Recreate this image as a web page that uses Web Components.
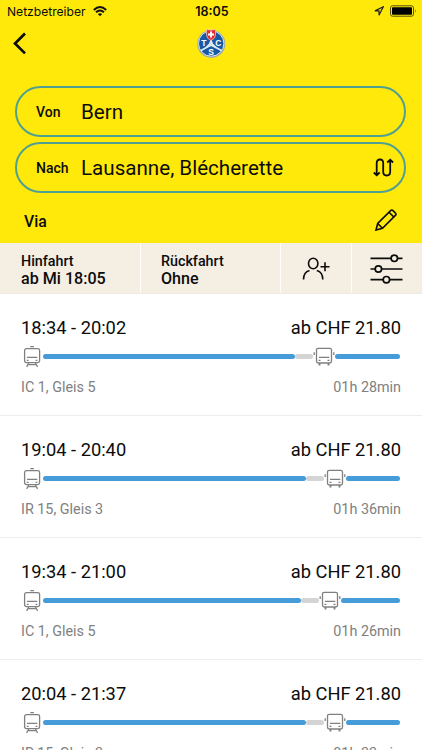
<!DOCTYPE html>
<html lang="de">
<head>
<meta charset="utf-8">
<meta name="viewport" content="width=device-width, initial-scale=1">
<title>Verbindungen</title>
<style>
  body { margin: 0; background: #fff; color: #0c0c0c; font-family: Roboto, sans-serif; height: 750px; overflow: hidden; }
</style>
</head>
<body>
<trip-app></trip-app>
<script>
class StatusBar extends HTMLElement {
  connectedCallback() {
    this.attachShadow({ mode: 'open' }).innerHTML = `
      <style>
        :host { display: grid; grid-template-columns: 1fr auto 1fr; align-items: center; height: 22px; padding: 0 5px 0 7px; font: 12.1px Inter, sans-serif; }
        .left, .right { display: flex; align-items: center; }
        .left { gap: 7px; }
        .right { justify-content: flex-end; gap: 6px; }
        .time { font-size: 12.5px; font-weight: 600; }
        svg { display: block; }
      </style>
      <span class="left"><span>Netzbetreiber</span>
        <svg width="14" height="11" viewBox="0 0 14 11" fill="none" stroke="#111" stroke-width="1.9">
          <path d="M.8 4Q7-1.9 13.2 4M3 6.3Q7 2.6 11 6.3"/><path d="M4.8 8.1Q7 6.2 9.2 8.1L7 10.3z" fill="#111" stroke="none"/>
        </svg></span>
      <span class="time">18:05</span>
      <span class="right">
        <svg width="10" height="10" viewBox="0 0 10 10" fill="none" stroke="#222" stroke-width="1.2"><path d="M9.3.8L.9 4.9H5V9.3z"/></svg>
        <svg width="27" height="12" viewBox="0 0 27 12"><rect x=".5" y=".8" width="23" height="10.4" rx="2" fill="none" stroke="#554f08"/><rect x="2" y="2.3" width="20" height="7.4" rx=".8"/><path d="M25 4.2q1.5 1.8 0 3.6z" fill="#554f08"/></svg>
      </span>`;
  }
}
customElements.define('status-bar', StatusBar);

class TopBar extends HTMLElement {
  connectedCallback() {
    this.attachShadow({ mode: 'open' }).innerHTML = `
      <style>
        :host { display: grid; grid-template-columns: 40px 1fr 40px; height: 64px; align-items: start; }
        svg { display: block; }
        .back { margin: 10px 0 0 12px; }
        .logo { margin: 6px auto 0; }
      </style>
      <svg class="back" width="16" height="23" viewBox="0 0 16 23" fill="none" stroke="#0c0c0c" stroke-width="2.7"><path d="M13 1.5L3 11.5l10 9.9"/></svg>
      <svg class="logo" width="30" height="31" viewBox="0 0 30 31">
        <circle cx="15.3" cy="15.9" r="14" fill="#9eaaa9"/>
        <circle cx="15.2" cy="15.5" r="12.7" fill="#1959a4" stroke="#dce6ea" stroke-width="1"/>
        <path d="M15 16V7M15 17L5 22.5M15 17l10.5 5.5" stroke="#dce8ef" stroke-width="1.8"/>
        <path d="M15 10l2 5.5 5 5-7-2.500-7 2.500 5-5z" fill="#dce8ef"/>
        <path d="M10.5 1.5Q15 2.6 19.5 1.5V7q0 3.6-4.5 5.4Q10.500 10.600 10.500 7z" fill="#e22e32" stroke="#efd1c9" stroke-width=".7"/>
        <path d="M15 3.5v6M12 6.5h6" stroke="#fff" stroke-width="2"/>
        <g fill="#fff" font-family="Liberation Sans, sans-serif" font-weight="700" font-size="8.5" text-anchor="middle"><text x="7.8" y="17.5">T</text><text x="22.3" y="17.5">C</text><text x="15" y="27">S</text></g>
      </svg>`;
  }
}
customElements.define('top-bar', TopBar);

class PlaceField extends HTMLElement {
  connectedCallback() {
    this.attachShadow({ mode: 'open' }).innerHTML = `
      <style>
        :host { display: flex; align-items: center; box-sizing: border-box; height: 51px; margin: 0 16px 5px 15px; padding: 0 10px 0 19px; border: 2px solid #50a091; border-radius: 26px; }
        .label { width: 45px; font-size: 14px; font-weight: 500; }
        .value { flex: 1; font-size: 20.6px; white-space: nowrap; }
      </style>
      <span class="label">${this.getAttribute('label')}</span>
      <span class="value">${this.getAttribute('value')}</span>
      <slot></slot>`;
  }
}
customElements.define('place-field', PlaceField);

class TripOptions extends HTMLElement {
  connectedCallback() {
    this.attachShadow({ mode: 'open' }).innerHTML = `
      <style>
        :host { display: grid; grid-template-columns: 141px 140px 71px 1fr; height: 51px; box-sizing: border-box; background: #f5eee3; border-bottom: 1px solid #eeeae4; font-weight: 500; }
        div { box-sizing: border-box; border-right: 1px solid #fffdf9; }
        div:last-child { border: 0; }
        .date { padding: 10px 0 0 21px; font-size: 14.3px; line-height: 17px; }
        .date + .date { padding-left: 20px; }
        b { display: block; font-size: 16.1px; line-height: 18px; font-weight: 500; }
        .icon { display: flex; align-items: center; justify-content: center; padding-top: 1px; }
        svg { display: block; }
      </style>
      <div class="date">Hinfahrt<b>ab Mi 18:05</b></div>
      <div class="date">Rückfahrt<b>Ohne</b></div>
      <div class="icon"><svg width="28" height="24" viewBox="0 0 28 24" fill="none" stroke="#0c0c0c" stroke-width="1.6"><ellipse cx="11.2" cy="6.5" rx="4.7" ry="5.3"/><path d="M1.5 22.5C1.5 17.5 4 14.5 7.5 13.5M14.8 13.5C18.5 14.5 20.8 17.5 20.8 22.5M18.5 9.8h9M23 5.3v9"/></svg></div>
      <div class="icon"><svg width="34" height="30" viewBox="0 0 34 30" fill="none" stroke="#0c0c0c" stroke-width="1.7"><path d="M.5 4.3h20.5M27.5 4.3h5M.5 15h4.500M11.500 15h21M.5 25.700h12.500M19.500 25.700h13"/><circle cx="24.3" cy="4.3" r="3.2"/><circle cx="8.4" cy="15" r="3.2"/><circle cx="16.4" cy="25.7" r="3.2"/></svg></div>`;
  }
}
customElements.define('trip-options', TripOptions);

class TripRow extends HTMLElement {
  connectedCallback() {
    const a = (name) => this.getAttribute(name);
    this.attachShadow({ mode: 'open' }).innerHTML = `
      <style>
        :host { display: block; box-sizing: border-box; height: 122px; padding: 22px 21px 0; border-bottom: 1px solid #efeeec; }
        .line { display: flex; justify-content: space-between; white-space: nowrap; }
        .head { font-size: 18.3px; line-height: 24px; }
        .info { font-size: 14.35px; line-height: 18px; color: #808080; margin-top: 7px; }
        .route { display: flex; align-items: center; height: 32px; margin-right: 1.5px; }
        .bar { height: 5px; border-radius: 3px; background: #459cd8; }
        .walk { width: 18px; background: #d4d4d4; }
        .last { flex: 1; }
        svg { display: block; flex: none; fill: none; stroke: #808080; stroke-width: 1.3; }
      </style>
      <div class="line head"><span>${a('time')}</span><span>ab CHF 21.80</span></div>
      <div class="route">
        <svg width="22" height="24" viewBox="0 0 22 24"><rect x="3.6" y="4.6" width="15" height="14" rx="1.8"/><path d="M9.3 2.6h3.6M6 13.4h10.3M7.8 19l-2.200 3.800M14.400 19l2.200 3.800M6.800 20.600h8.600"/><path d="M5.8 16.3h1.8M14.6 16.3h1.8"/></svg>
        <span class="bar" style="width:${a('leg')}px"></span>
        <span class="bar walk"></span>
        <svg width="22" height="22" viewBox="0 0 22 22"><rect x="3.5" y="3.3" width="15" height="14.7" rx="1.8"/><path d="M6 12.3h10.3M1.2 7.2v2.8M20.8 7.2v2.8M5.5 15.3h2M14.5 15.3h2"/><path d="M6.5 18v2.5M15.5 18v2.5" stroke-width="1.9"/></svg>
        <span class="bar last"></span>
      </div>
      <div class="line info"><span>${a('line')}</span><span>${a('duration')}</span></div>`;
  }
}
customElements.define('trip-row', TripRow);

class TripApp extends HTMLElement {
  connectedCallback() {
    this.attachShadow({ mode: 'open' }).innerHTML = `
      <style>
        :host { display: block; height: 750px; overflow: hidden; }
        header { background: #ffe90b; height: 243px; }
        .via { display: flex; align-items: center; justify-content: space-between; height: 46px; padding: 0 25.5px 0 24px; font-size: 15.8px; font-weight: 500; }
        .via svg { margin-bottom: 2px; }
        svg { display: block; fill: none; stroke: #0c0c0c; }
      </style>
      <header>
        <status-bar></status-bar>
        <top-bar></top-bar>
        <place-field label="Von" value="Bern"></place-field>
        <place-field label="Nach" value="Lausanne, Blécherette">
          <svg width="21" height="19" viewBox="0 0 21 19" stroke-width="1.8"><path d="M3.7 17V5.2Q3.7 1.5 7 1.5T10.2 5.2V13.8Q10.2 17.5 13.7 17.5T17.2 13.8V2M.8 14.5l2.9 2.7 3-2.7M14.2 4.5l3-2.7 2.9 2.7"/></svg>
        </place-field>
        <div class="via"><span>Via</span>
          <svg width="22" height="22" viewBox="0 0 22 22" stroke-width="1.6"><path d="M1 21l1.7-6.5L15.6 1.6q1.2-1.2 2.4 0l2.4 2.4q1.2 1.2 0 2.4L7.5 19.3zM2.7 14.5l4.8 4.8M14 3.2l4.8 4.8"/></svg>
        </div>
      </header>
      <trip-options></trip-options>
      <main>
        <trip-row time="18:34 - 20:02" leg="251.5" line="IC 1, Gleis 5" duration="01h 28min"></trip-row>
        <trip-row time="19:04 - 20:40" leg="262.5" line="IR 15, Gleis 3" duration="01h 36min"></trip-row>
        <trip-row time="19:34 - 21:00" leg="257.5" line="IC 1, Gleis 5" duration="01h 26min"></trip-row>
        <trip-row time="20:04 - 21:37" leg="262.5" line="IR 15, Gleis 3" duration="01h 33min"></trip-row>
      </main>`;
  }
}
customElements.define('trip-app', TripApp);
</script>
</body>
</html>
